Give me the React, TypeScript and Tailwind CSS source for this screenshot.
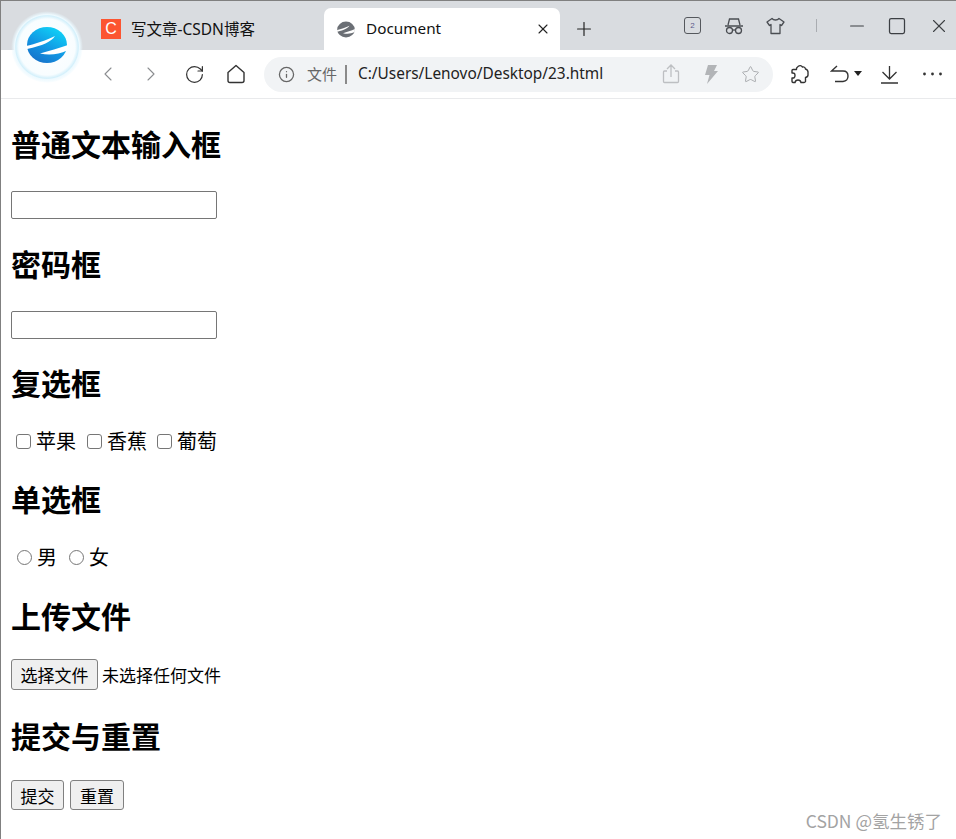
import React from 'react';
import { X, Plus, Minus, Square, ChevronLeft, ChevronRight, RotateCw, Info, Star } from 'lucide-react';

const cjk = "font-['Noto_Sans','Noto_Sans_CJK_SC',sans-serif]";

function Logo() {
  return (
    <svg width="72" height="72" viewBox="0 0 72 72" className="absolute left-[10px] top-[10px]">
      <defs>
        <radialGradient id="halo" cx="50%" cy="50%" r="50%">
          <stop offset="0%" stopColor="#ffffff" />
          <stop offset="78%" stopColor="#f8fdff" />
          <stop offset="87%" stopColor="#d4f0fb" />
          <stop offset="90%" stopColor="#eefaff" />
          <stop offset="100%" stopColor="#e6f7fe" stopOpacity="0" />
        </radialGradient>
        <linearGradient id="ball" x1="0.8" y1="0" x2="0.2" y2="1">
          <stop offset="0%" stopColor="#0fd6f8" />
          <stop offset="55%" stopColor="#1298e4" />
          <stop offset="100%" stopColor="#176fc8" />
        </linearGradient>
      </defs>
      <circle cx="36" cy="36" r="36" fill="url(#halo)" />
      <g transform="translate(2 2)">
        <ellipse cx="34" cy="32" rx="20" ry="18" fill="url(#ball)" />
        <path d="M13 33 C22 31 34 27 42 23 C38 29 30 32.500 14 36Z" fill="#ffffff" />
        <path d="M55 32 C46 35 36 38 27 40.500 C36 42.500 46 41.500 54 37.500Z" fill="#ffffff" />
      </g>
    </svg>
  );
}

function TabLogo() {
  return (
    <svg width="18" height="17" viewBox="13 13 42 38">
      <ellipse cx="34" cy="32" rx="20.500" ry="18.500" fill="#6b6f75" />
      <path d="M13 33 C22 31 34 27 42 23 C38 29 30 33 14 37Z" fill="#ffffff" />
      <path d="M55 31 C46 35 36 38 27 40.500 C36 43 46 42 54 38Z" fill="#ffffff" />
    </svg>
  );
}

function TopIcons() {
  return (
    <div className="flex items-center text-[#4a4d52]">
      <div className="flex w-[17px] h-[17px] items-center justify-center rounded-[3px] border border-[#55585d] text-[8px] text-[#5a5a8c] font-['Liberation_Sans',sans-serif]">2</div>
      <svg width="20" height="18" viewBox="0 0 20 18" fill="none" stroke="#4a4d52" strokeWidth="1.300" className="ml-[23px]">
        <path d="M1 9h18M4 8l1.500-6h9L16 8" />
        <circle cx="5.500" cy="13.500" r="3" />
        <circle cx="14.500" cy="13.500" r="3" />
        <path d="M8.500 13h3" />
      </svg>
      <svg width="19" height="18" viewBox="0 0 19 18" fill="none" stroke="#4a4d52" strokeWidth="1.300" className="ml-[22px]">
        <path d="M6 1.500 C7.500 3.500 11.500 3.500 13 1.500 L18 5 L15.500 8.500 L14 7.500 V16.500 H5 V7.500 L3.500 8.500 L1 5Z" strokeLinejoin="round" />
      </svg>
      <div className="ml-[31px] h-[13px] w-px bg-[#a9acb1]" />
      <Minus size={22} strokeWidth={1.200} color="#3c3f43" className="ml-[29px]" />
      <Square size={20} strokeWidth={1.500} color="#3c3f43" className="ml-[19px]" />
      <X size={22} strokeWidth={1.200} color="#3c3f43" className="ml-[21px] mr-[6px]" />
    </div>
  );
}

function TabStrip() {
  return (
    <div className="flex h-[49px] bg-[#d9dce0] pl-[99px]">
      <div className="mt-[7px] flex w-[224px] h-[42px] items-center gap-[10px] pl-[1px]">
        <div className="flex h-5 w-5 items-center justify-center bg-[#fc5531] text-[16px] leading-none text-white font-['Liberation_Sans',sans-serif]">C</div>
        <span className={`pt-[2px] text-[15.500px] text-[#111] ${cjk}`}>写文章-CSDN博客</span>
      </div>
      <div className="mt-[7px] flex h-[42px] w-[236px] items-center rounded-t-[7px] bg-white pl-[13px] pr-[9px]">
        <TabLogo />
        <span className={`ml-[11px] flex-1 pb-[2px] text-[15.300px] text-[#111] ${cjk}`}>Document</span>
        <X size={16} strokeWidth={1.600} color="#222" />
      </div>
      <div className="ml-[13px] mt-[7px] flex h-[42px] items-center">
        <Plus size={22} strokeWidth={1.300} color="#222" />
      </div>
      <div className="ml-auto flex items-center">
        <TopIcons />
      </div>
    </div>
  );
}

function Toolbar() {
  return (
    <div className="flex h-[49px] items-center border-b border-[#e9eaec] bg-white pl-[95px]">
      <ChevronLeft size={24} strokeWidth={1.100} color="#8b8d90" />
      <ChevronRight size={24} strokeWidth={1.100} color="#8b8d90" className="ml-[19px]" />
      <RotateCw size={21} strokeWidth={1.400} color="#333" className="ml-[21px]" />
      <svg width="20" height="20" viewBox="0 0 20 20" fill="none" stroke="#333" strokeWidth="1.400" className="ml-[21px]">
        <path d="M2 8.500 L10 1.500 L18 8.500 V16.500 Q18 18.500 16 18.500 H4 Q2 18.500 2 16.500Z" strokeLinejoin="round" />
      </svg>
      <div className="ml-[18px] flex h-[35px] w-[509px] items-center rounded-[18px] bg-[#f1f3f5] pl-[14px]">
        <Info size={17} strokeWidth={1.800} color="#666" />
        <span className={`ml-[12px] text-[15px] text-[#666] ${cjk}`}>文件</span>
        <div className="ml-[8px] h-[19px] w-[2px] bg-[#8a8a8a]" />
        <span className={`ml-[11px] flex-1 text-[15.400px] text-[#222] ${cjk}`}>C:/Users/Lenovo/Desktop/23.html</span>
        <svg width="18" height="20" viewBox="0 0 18 20" fill="none" stroke="#bdbfc2" strokeWidth="1.300">
          <path d="M5 7H2.500Q1.500 7 1.500 8V17.500Q1.500 18.500 2.500 18.500H15.500Q16.500 18.500 16.500 17.500V8Q16.500 7 15.500 7H13M9 13V1.500M5 5l4-4 4 4" />
        </svg>
        <svg width="14" height="19" viewBox="0 0 14 19" fill="#b2b4b7" className="ml-[24px]">
          <path d="M4 0H13L10 6H14L3 19L5.500 10H1Z" />
        </svg>
        <Star size={19} strokeWidth={1.200} color="#a8aaad" className="ml-[23px] mr-[13px]" />
      </div>
      <svg width="20" height="20" viewBox="0 0 20 20" fill="none" stroke="#333" strokeWidth="1.400" className="ml-[17px]">
        <path d="M8 2.500Q10.500 0.500 12.500 3Q15 2.500 15.500 5Q18.500 6 18 9.500Q18.500 13 15.500 13.500V17.500Q15 18.500 14 18.500H11Q10.500 16 8 16Q5.500 16 5 18.500H3Q2 18.500 2 17V14Q5 14.500 5 11.500Q5 8.500 2 9V6.500Q2 5.500 3 5.500H6.500Q6 4 8 2.500Z" strokeLinejoin="round" />
      </svg>
      <svg width="20" height="18" viewBox="0 0 20 18" fill="none" stroke="#333" strokeWidth="1.400" className="ml-[20px]">
        <path d="M7 1L1.500 6L7 6 M1.500 6H13Q18 6 18 11T13 16.500H5" />
      </svg>
      <div className="ml-[4px] mt-[-2px] h-0 w-0 border-x-[4px] border-t-[5px] border-x-transparent border-t-[#222]" />
      <svg width="19" height="19" viewBox="0 0 19 19" fill="none" stroke="#333" strokeWidth="1.300" className="ml-[18px]">
        <path d="M9.500 1V13.500M2.500 7l7 7 7-7M1 18H18" />
      </svg>
      <svg width="19" height="4" viewBox="0 0 19 4" fill="#333" className="ml-[24px]">
        <circle cx="1.500" cy="2" r="1.400" />
        <circle cx="9.500" cy="2" r="1.400" />
        <circle cx="17.500" cy="2" r="1.400" />
      </svg>
    </div>
  );
}

function Heading({ children, className }: { children: React.ReactNode; className?: string }) {
  return <h2 className={`text-[30px] leading-[40px] font-bold text-black ${className}`}>{children}</h2>;
}

function NativeButton({ label, className }: { label: string; className?: string }) {
  return (
    <button className={`rounded-[3px] border border-[#808080] bg-[#efefef] text-[17px] leading-none text-black ${className}`}>
      {label}
    </button>
  );
}

function Box({ round }: { round?: boolean }) {
  return <input type={round ? 'radio' : 'checkbox'} className={`h-[15px] w-[15px] appearance-none border border-[#767676] bg-white ${round ? 'rounded-full' : 'rounded-[3px]'}`} />;
}

function TextField() {
  return <input type="text" className="block h-[28px] w-[206px] rounded-[2px] border border-[#767676] bg-white" />;
}

export default function App() {
  return (
    <div className="relative h-[839px] w-[956px] overflow-hidden border-t border-l border-[#808080] bg-white font-['Noto_Sans_CJK_SC',sans-serif]">
      <TabStrip />
      <Toolbar />
      <Logo />
      <main className="pl-[10px] pt-[24px]">
        <Heading>普通文本输入框</Heading>
        <div className="mt-[28px]"><TextField /></div>
        <Heading className="mt-[24px]">密码框</Heading>
        <div className="mt-[28px]"><TextField /></div>
        <Heading className="mt-[23px]">复选框</Heading>
        <div className="mt-[24px] flex h-[30px] items-center text-[20px] text-black">
          <span className="ml-[5px] flex items-center gap-[5px]"><Box />苹果</span>
          <span className="ml-[11px] flex items-center gap-[5px]"><Box />香蕉</span>
          <span className="ml-[10px] flex items-center gap-[5px]"><Box />葡萄</span>
        </div>
        <Heading className="mt-[22px]">单选框</Heading>
        <div className="mt-[24px] flex h-[30px] items-center text-[20px] text-black">
          <span className="ml-[6px] flex items-center gap-[5px]"><Box round />男</span>
          <span className="ml-[12px] flex items-center gap-[5px]"><Box round />女</span>
        </div>
        <Heading className="mt-[23px]">上传文件</Heading>
        <div className="mt-[24px] flex items-center text-[17px] text-black">
          <NativeButton label="选择文件" className="h-[31px] w-[87px]" />
          <span className="ml-[4px]">未选择任何文件</span>
        </div>
        <Heading className="mt-[25px]">提交与重置</Heading>
        <div className="mt-[25px] flex gap-[6px]">
          <NativeButton label="提交" className="h-[30px] w-[53px]" />
          <NativeButton label="重置" className="h-[30px] w-[54px]" />
        </div>
      </main>
      <div className="absolute right-[14px] top-[807px] text-[17.500px] text-[#a3a3a3]">CSDN @氢生锈了</div>
    </div>
  );
}
